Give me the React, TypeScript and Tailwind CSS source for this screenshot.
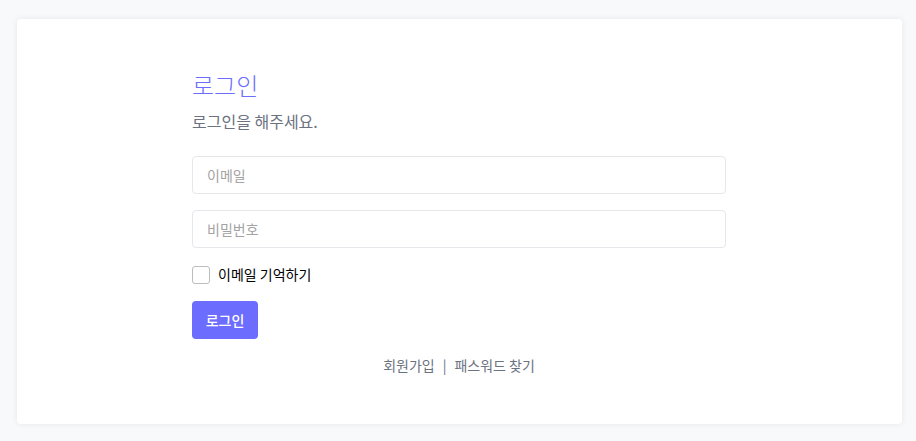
export default function App() {
  return (
    <div
      className="min-h-[441px] w-full bg-[#f8f9fb] pt-[19px] pl-[17px] pr-[14px]"
      style={{ fontFamily: '"Noto Sans CJK KR", "Noto Sans", sans-serif' }}
    >
      <div className="h-[405px] rounded-[4px] bg-white shadow-[0_0_6px_rgba(0,0,0,0.08)] pt-[48px]">
        <div className="ml-[175px] w-[534px] flex flex-col">
          <h1 className="text-[24px] leading-[36px] font-light text-[#6c6cff]">로그인</h1>
          <p className="mt-[6px] text-[16px] leading-[24px] text-[#6b7280]">로그인을 해주세요.</p>

          <input
            type="text"
            placeholder="이메일"
            className="mt-[23px] h-[38px] w-full rounded-[4px] border border-[#e5e7eb] px-[14px] text-[14px] placeholder:text-[#a3a3a3] outline-none"
          />
          <input
            type="password"
            placeholder="비밀번호"
            className="mt-[16px] h-[38px] w-full rounded-[4px] border border-[#e5e7eb] px-[14px] text-[14px] placeholder:text-[#a3a3a3] outline-none"
          />

          <label className="mt-[16px] flex items-center gap-[8px]">
            <span className="h-[18px] w-[18px] rounded-[3px] border border-[#bdbdbd] bg-white" />
            <span className="text-[14px] text-black">이메일 기억하기</span>
          </label>

          <button className="mt-[16px] h-[38px] w-[66px] rounded-[4px] bg-[#6c6cff] text-[14px] font-medium text-white">
            로그인
          </button>

          <div className="mt-[16px] flex justify-center gap-[8px] text-[14px] text-[#6b7280]">
            <span>회원가입</span>
            <span>|</span>
            <span>패스워드 찾기</span>
          </div>
        </div>
      </div>
    </div>
  )
}
